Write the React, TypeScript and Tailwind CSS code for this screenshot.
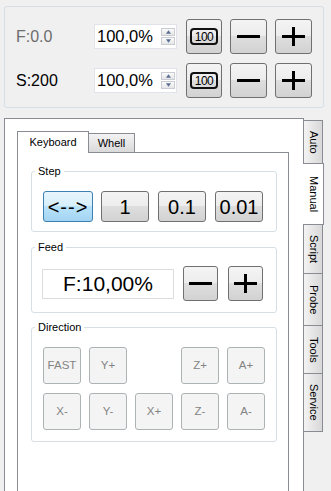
import type { ReactNode } from 'react';

const btnBase =
  'flex items-center justify-center rounded-[3px] border border-[#707070] bg-[linear-gradient(to_bottom,#f4f4f4_0%,#ececec_50%,#dedede_50%,#d2d2d2_100%)]';
const btnActive =
  'flex items-center justify-center rounded-[3px] border border-[#3c7fb1] bg-[linear-gradient(to_bottom,#e8f5fc_0%,#d6effc_50%,#b9e3fb_50%,#a3d4f2_100%)]';
const paneBorder = 'border-[#898c95]';

function Minus() {
  return (
    <svg width="23" height="3" viewBox="0 0 23 3">
      <rect x="0" y="0" width="23" height="3" fill="#000" />
    </svg>
  );
}

function Plus() {
  return (
    <svg width="23" height="19" viewBox="0 0 23 19">
      <rect x="0" y="8" width="23" height="3" fill="#000" />
      <rect x="10" y="0" width="3" height="19" fill="#000" />
    </svg>
  );
}

function Hundred() {
  return (
    <span className="flex h-[17px] w-[28px] items-center justify-center rounded-[4px] border-2 border-[#111] text-[12px] leading-none tracking-[-0.5px] text-black">
      100
    </span>
  );
}

function SpinBox() {
  return (
    <div className="flex h-[25px] w-[83px] items-center justify-between border border-[#e2e3ea] bg-white pl-[2px] pr-[1px]">
      <span className="text-[16.5px] leading-none">100,0%</span>
      <div className="flex flex-col gap-px">
        {['M0.5 5.5 L3.5 1.5 L6.5 5.5 Z', 'M0.5 1.5 L3.5 5.5 L6.5 1.5 Z'].map((d) => (
          <span
            key={d}
            className="flex h-[8px] w-[14px] items-center justify-center border border-[#c9ccd3] bg-[linear-gradient(to_bottom,#fbfbfb,#e6e6e6)]"
          >
            <svg width="7" height="6" viewBox="0 0 7 7">
              <path d={d} fill="#5a6f93" />
            </svg>
          </span>
        ))}
      </div>
    </div>
  );
}

function OverrideRow({ label, dim }: { label: string; dim?: boolean }) {
  return (
    <div className="flex h-[35px] items-center">
      <span className={`w-[78px] text-[16px] ${dim ? 'text-[#6d6d6d]' : 'text-black'}`}>{label}</span>
      <SpinBox />
      <button className={`${btnBase} ml-[9px] h-[35px] w-[36px]`}>
        <Hundred />
      </button>
      <button className={`${btnBase} ml-[8px] h-[35px] w-[37px]`}>
        <Minus />
      </button>
      <button className={`${btnBase} ml-[8px] h-[35px] w-[37px]`}>
        <Plus />
      </button>
    </div>
  );
}

function Group({ title, children }: { title: string; children: ReactNode }) {
  return (
    <fieldset className="w-[246px] rounded-[3px] border border-[#d5dfe5]">
      <legend className="ml-[3px] px-[3px] text-[11px] leading-[14px] text-black">{title}</legend>
      {children}
    </fieldset>
  );
}

const sideTabs = [
  { label: 'Auto', h: 'h-[44px]' },
  { label: 'Manual', h: 'h-[62px]', active: true },
  { label: 'Script', h: 'h-[50px]' },
  { label: 'Probe', h: 'h-[53px]' },
  { label: 'Tools', h: 'h-[49px]' },
  { label: 'Service', h: 'h-[59px]' },
];

const dirTop = ['FAST', 'Y+', '', 'Z+', 'A+'];
const dirBottom = ['X-', 'Y-', 'X+', 'Z-', 'A-'];

export default function App() {
  return (
    <div className="h-[491px] w-[331px] overflow-hidden bg-[#f0f0f0] px-[4px] pt-[6px] font-['Liberation_Sans',Arial,sans-serif] text-black">
      <div className="flex h-[102px] w-[320px] flex-col gap-[9px] rounded-[3px] border border-[#d5dfe5] pl-[11px] pt-[12px]">
        <OverrideRow label="F:0.0" dim />
        <OverrideRow label="S:200" />
      </div>

      <div className="mt-[10px] flex items-start">
        <div className={`h-[380px] w-[300px] border ${paneBorder} bg-white pl-[12px] pt-[12px]`}>
          <div className="flex h-[21px] items-end">
            <div
              className={`relative z-10 -mb-px flex h-[22px] w-[72px] items-center justify-center border border-b-0 ${paneBorder} bg-white text-[11px]`}
            >
              Keyboard
            </div>
            <div
              className={`-ml-px flex h-[19px] w-[47px] items-center justify-center border border-b-0 ${paneBorder} bg-[linear-gradient(to_bottom,#f3f3f3,#dadada)] text-[11px]`}
            >
              Whell
            </div>
          </div>

          <div className={`h-[360px] w-[272px] border ${paneBorder} bg-white pl-[13px] pt-[11px]`}>
            <Group title="Step">
              <div className="flex pb-[9px] pl-[11px] pt-[13px]">
                <button className={`${btnActive} h-[31px] w-[50px] text-[20px] leading-none tracking-[1px]`}>
                  {'<-->'}
                </button>
                <button className={`${btnBase} ml-[8px] h-[31px] w-[48px] text-[20px] leading-none`}>1</button>
                <button className={`${btnBase} ml-[9px] h-[31px] w-[48px] text-[20px] leading-none`}>0.1</button>
                <button className={`${btnBase} ml-[9px] h-[31px] w-[48px] text-[20px] leading-none`}>0.01</button>
              </div>
            </Group>

            <div className="mt-[8px]">
              <Group title="Feed">
                <div className="flex items-center pb-[11px] pl-[10px] pt-[12px]">
                  <div className="flex h-[30px] w-[132px] items-center justify-center border border-[#dcdcdc] bg-white text-[21px] leading-none">
                    F:10,00%
                  </div>
                  <button className={`${btnBase} ml-[9px] h-[35px] w-[35px]`}>
                    <Minus />
                  </button>
                  <button className={`${btnBase} ml-[10px] h-[35px] w-[35px]`}>
                    <Plus />
                  </button>
                </div>
              </Group>
            </div>

            <div className="mt-[7px]">
              <Group title="Direction">
                <div className="grid grid-cols-[repeat(5,38px)] gap-x-[8px] gap-y-[9px] pb-[11px] pl-[11px] pt-[13px]">
                  {[...dirTop, ...dirBottom].map((k, i) =>
                    k ? (
                      <div
                        key={i}
                        className="flex h-[37px] items-center justify-center rounded-[3px] border border-[#adb2b5] bg-[#f4f4f4] text-[11.5px] text-[#838383]"
                      >
                        {k}
                      </div>
                    ) : (
                      <div key={i} className="h-[37px]" />
                    ),
                  )}
                </div>
              </Group>
            </div>
          </div>
        </div>

        <div className="mt-[2px] flex flex-col">
          {sideTabs.map((t, i) => (
            <div
              key={t.label}
              className={`flex items-center justify-center border-y border-r ${paneBorder} ${t.h} ${
                i > 0 ? '-mt-px' : ''
              } ${
                t.active
                  ? 'relative z-10 -ml-px w-[21px] bg-white'
                  : 'w-[19px] bg-[linear-gradient(to_right,#f3f3f3,#d8d8d8)]'
              }`}
            >
              <span className="text-[11px] leading-none [writing-mode:vertical-rl]">{t.label}</span>
            </div>
          ))}
        </div>
      </div>
    </div>
  );
}
